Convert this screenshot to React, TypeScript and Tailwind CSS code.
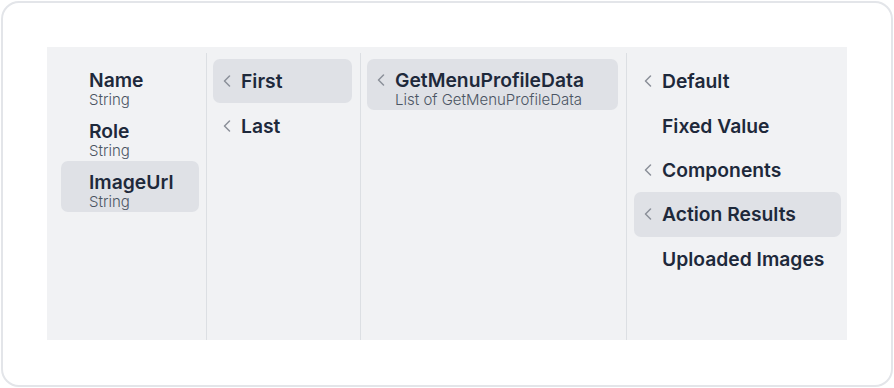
import React from "react";

const Chevron = () => (
  <svg width="8" height="12" viewBox="0 0 8 12" className="shrink-0" fill="none">
    <polyline points="6.5,1 1.5,6 6.5,11" stroke="#8b9099" strokeWidth="1.5" strokeLinecap="round" strokeLinejoin="round" />
  </svg>
);

type Single = { label: string; chevron?: boolean; selected?: boolean };

const SingleItem = ({ label, chevron, selected }: Single) => (
  <div
    className={`flex items-center h-[44.4px] rounded-[7px] pl-[10px] ${selected ? "bg-[#dfe1e6]" : ""}`}
  >
    <div className="w-[8px] mr-[10px] flex items-center">{chevron ? <Chevron /> : null}</div>
    <span className="text-[19.3px] leading-6 font-semibold text-[#1e293b] whitespace-nowrap">{label}</span>
  </div>
);

type Double = { label: string; sub: string; chevron?: boolean; selected?: boolean };

const DoubleItem = ({ label, sub, chevron, selected }: Double) => (
  <div className={`flex h-[51px] rounded-[7px] pl-[10px] pt-[9.5px] ${selected ? "bg-[#dfe1e6]" : ""}`}>
    <div className="w-[8px] mr-[10px] h-[23.5px] flex items-center">{chevron ? <Chevron /> : null}</div>
    <div className="flex flex-col">
      <span className="text-[19.3px] leading-[23.5px] font-semibold text-[#1e293b] whitespace-nowrap">{label}</span>
      <span className="text-[15px] leading-[16px] font-light text-[#4b5563] whitespace-nowrap">{sub}</span>
    </div>
  </div>
);

export default function App() {
  return (
    <div className="w-[894px] h-[388px] bg-white p-[1px]" style={{ fontFamily: "Inter, 'Noto Sans', sans-serif" }}>
      <div className="w-[892px] h-[386px] border-2 border-[#e3e5e9] rounded-[18px] p-[44px]">
        <div className="w-[800px] h-[293px] bg-[#f1f2f4] pt-[6px] flex">
          <div className="w-[159px] h-full pt-[6px] pl-[14px] pr-[7px] flex flex-col">
            <DoubleItem label="Name" sub="String" />
            <DoubleItem label="Role" sub="String" />
            <DoubleItem label="ImageUrl" sub="String" selected />
          </div>
          <div className="w-[154px] h-full border-l border-[#dcdfe3] pt-[6px] pl-[6px] pr-[8px] flex flex-col">
            <SingleItem label="First" chevron selected />
            <SingleItem label="Last" chevron />
          </div>
          <div className="w-[266px] h-full border-l border-[#dcdfe3] pt-[6px] pl-[6px] pr-[8px] flex flex-col">
            <DoubleItem label="GetMenuProfileData" sub="List of GetMenuProfileData" chevron selected />
          </div>
          <div className="w-[221px] h-full border-l border-[#dcdfe3] pt-[6px] pl-[7px] pr-[6px] flex flex-col">
            <SingleItem label="Default" chevron />
            <SingleItem label="Fixed Value" />
            <SingleItem label="Components" chevron />
            <SingleItem label="Action Results" chevron selected />
            <SingleItem label="Uploaded Images" />
          </div>
        </div>
      </div>
    </div>
  );
}
